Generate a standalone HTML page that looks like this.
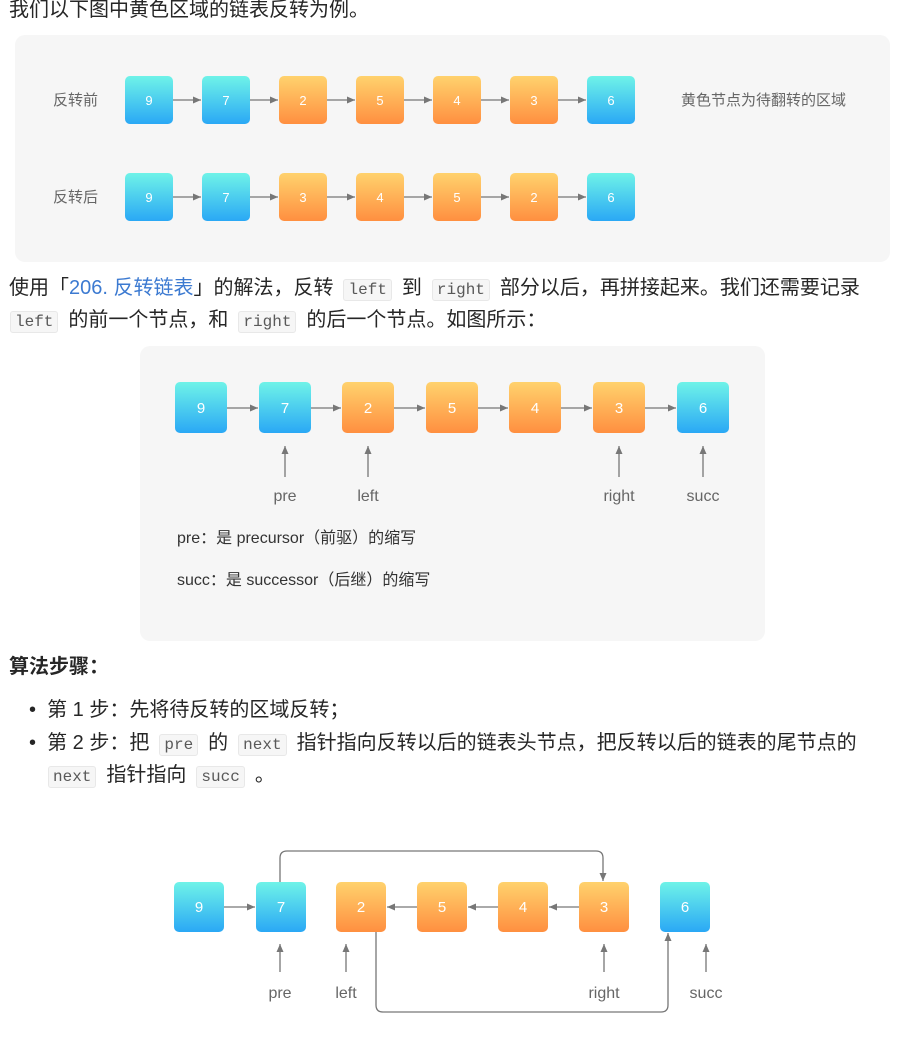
<!DOCTYPE html>
<html><head><meta charset="utf-8">
<style>
body{margin:0;width:898px;height:1042px;background:#fff;font-family:"Liberation Sans","Noto Sans CJK SC",sans-serif;color:#262626;font-size:20px;position:relative;overflow:hidden}
.t{position:absolute;white-space:nowrap;line-height:26px}
code{font-family:"Liberation Mono","DejaVu Sans Mono",monospace;font-size:16px;color:#595959;background:#f6f6f6;border:1px solid #e8e8e8;border-radius:3px;padding:1px 4px;margin:0 10px}
a{color:#3c7ad1;text-decoration:none}
svg{position:absolute;left:0;top:0}
svg text{font-family:"Liberation Sans","Noto Sans CJK SC",sans-serif}
</style></head><body>
<svg width="898" height="1042">
<defs>
<linearGradient id="b" x1="0" y1="0" x2="0" y2="1"><stop offset="0" stop-color="#6ff3e8"/><stop offset="1" stop-color="#2aa8f5"/></linearGradient>
<linearGradient id="o" x1="0" y1="0" x2="0" y2="1"><stop offset="0" stop-color="#ffd26d"/><stop offset="1" stop-color="#ff8f40"/></linearGradient>
<marker id="ar" markerUnits="userSpaceOnUse" markerWidth="9" markerHeight="8" refX="8" refY="4" orient="auto"><path d="M0,0.5 L8,4 L0,7.5 z" fill="#777"/></marker>
</defs>
<rect x="15" y="35" width="875" height="227" rx="10" fill="#f6f6f6"/>
<rect x="140" y="346" width="625" height="295" rx="10" fill="#f6f6f6"/>
<g font-size="15" fill="#666">
<text x="53" y="105">反转前</text><text x="53" y="202">反转后</text>
<text x="681" y="105">黄色节点为待翻转的区域</text>
</g>
<g stroke="#777" stroke-width="1.3" marker-end="url(#ar)">
<line x1="173" y1="100" x2="201" y2="100"/><line x1="250" y1="100" x2="278" y2="100"/><line x1="327" y1="100" x2="355" y2="100"/><line x1="404" y1="100" x2="432" y2="100"/><line x1="481" y1="100" x2="509" y2="100"/><line x1="558" y1="100" x2="586" y2="100"/>
<line x1="173" y1="197" x2="201" y2="197"/><line x1="250" y1="197" x2="278" y2="197"/><line x1="327" y1="197" x2="355" y2="197"/><line x1="404" y1="197" x2="432" y2="197"/><line x1="481" y1="197" x2="509" y2="197"/><line x1="558" y1="197" x2="586" y2="197"/>
<line x1="227" y1="408" x2="258" y2="408"/><line x1="311" y1="408" x2="341" y2="408"/><line x1="394" y1="408" x2="425" y2="408"/><line x1="478" y1="408" x2="508" y2="408"/><line x1="561" y1="408" x2="592" y2="408"/><line x1="645" y1="408" x2="676" y2="408"/>
<line x1="285" y1="477" x2="285" y2="446"/><line x1="368" y1="477" x2="368" y2="446"/><line x1="619" y1="477" x2="619" y2="446"/><line x1="703" y1="477" x2="703" y2="446"/>
<line x1="224" y1="907" x2="255" y2="907"/>
<line x1="579" y1="907" x2="549" y2="907"/><line x1="498" y1="907" x2="468" y2="907"/><line x1="417" y1="907" x2="387" y2="907"/>
<line x1="280" y1="972" x2="280" y2="944"/><line x1="346" y1="972" x2="346" y2="944"/><line x1="604" y1="972" x2="604" y2="944"/><line x1="706" y1="972" x2="706" y2="944"/>
<path d="M280,882 V858 Q280,851 287,851 H596 Q603,851 603,858 V881" fill="none"/>
<path d="M376,932 V1005 Q376,1012 383,1012 H661 Q668,1012 668,1005 V933" fill="none"/>
</g>
<g font-size="13" fill="#fff" text-anchor="middle">
<rect x="125" y="76" width="48" height="48" rx="5" fill="url(#b)"/><text x="149" y="105">9</text>
<rect x="202" y="76" width="48" height="48" rx="5" fill="url(#b)"/><text x="226" y="105">7</text>
<rect x="279" y="76" width="48" height="48" rx="5" fill="url(#o)"/><text x="303" y="105">2</text>
<rect x="356" y="76" width="48" height="48" rx="5" fill="url(#o)"/><text x="380" y="105">5</text>
<rect x="433" y="76" width="48" height="48" rx="5" fill="url(#o)"/><text x="457" y="105">4</text>
<rect x="510" y="76" width="48" height="48" rx="5" fill="url(#o)"/><text x="534" y="105">3</text>
<rect x="587" y="76" width="48" height="48" rx="5" fill="url(#b)"/><text x="611" y="105">6</text>
<rect x="125" y="173" width="48" height="48" rx="5" fill="url(#b)"/><text x="149" y="202">9</text>
<rect x="202" y="173" width="48" height="48" rx="5" fill="url(#b)"/><text x="226" y="202">7</text>
<rect x="279" y="173" width="48" height="48" rx="5" fill="url(#o)"/><text x="303" y="202">3</text>
<rect x="356" y="173" width="48" height="48" rx="5" fill="url(#o)"/><text x="380" y="202">4</text>
<rect x="433" y="173" width="48" height="48" rx="5" fill="url(#o)"/><text x="457" y="202">5</text>
<rect x="510" y="173" width="48" height="48" rx="5" fill="url(#o)"/><text x="534" y="202">2</text>
<rect x="587" y="173" width="48" height="48" rx="5" fill="url(#b)"/><text x="611" y="202">6</text>
</g>
<g font-size="15" fill="#fff" text-anchor="middle">
<rect x="175" y="382" width="52" height="51" rx="5" fill="url(#b)"/><text x="201" y="413">9</text>
<rect x="259" y="382" width="52" height="51" rx="5" fill="url(#b)"/><text x="285" y="413">7</text>
<rect x="342" y="382" width="52" height="51" rx="5" fill="url(#o)"/><text x="368" y="413">2</text>
<rect x="426" y="382" width="52" height="51" rx="5" fill="url(#o)"/><text x="452" y="413">5</text>
<rect x="509" y="382" width="52" height="51" rx="5" fill="url(#o)"/><text x="535" y="413">4</text>
<rect x="593" y="382" width="52" height="51" rx="5" fill="url(#o)"/><text x="619" y="413">3</text>
<rect x="677" y="382" width="52" height="51" rx="5" fill="url(#b)"/><text x="703" y="413">6</text>
<rect x="174" y="882" width="50" height="50" rx="5" fill="url(#b)"/><text x="199" y="912">9</text>
<rect x="256" y="882" width="50" height="50" rx="5" fill="url(#b)"/><text x="281" y="912">7</text>
<rect x="336" y="882" width="50" height="50" rx="5" fill="url(#o)"/><text x="361" y="912">2</text>
<rect x="417" y="882" width="50" height="50" rx="5" fill="url(#o)"/><text x="442" y="912">5</text>
<rect x="498" y="882" width="50" height="50" rx="5" fill="url(#o)"/><text x="523" y="912">4</text>
<rect x="579" y="882" width="50" height="50" rx="5" fill="url(#o)"/><text x="604" y="912">3</text>
<rect x="660" y="882" width="50" height="50" rx="5" fill="url(#b)"/><text x="685" y="912">6</text>
</g>
<g font-size="16" fill="#666" text-anchor="middle">
<text x="285" y="501">pre</text><text x="368" y="501">left</text><text x="619" y="501">right</text><text x="703" y="501">succ</text>
<text x="280" y="998">pre</text><text x="346" y="998">left</text><text x="604" y="998">right</text><text x="706" y="998">succ</text>
</g>
<g font-size="16" fill="#333">
<text x="177" y="543">pre：是 precursor（前驱）的缩写</text>
<text x="177" y="585">succ：是 successor（后继）的缩写</text>
</g>
</svg>
<div class="t" style="left:9px;top:-3px">我们以下图中黄色区域的链表反转为例。</div>
<div class="t" style="left:9px;top:275px">使用「<a>206. 反转链表</a>」的解法，反转<code>left</code>到<code>right</code>部分以后，再拼接起来。我们还需要记录</div>
<div class="t" style="left:0px;top:307px"><code>left</code>的前一个节点，和<code>right</code>的后一个节点。如图所示：</div>
<div class="t" style="left:9px;top:654px;font-weight:bold">算法步骤：</div>
<div class="t" style="left:29px;top:697px">•&nbsp;&nbsp;第 1 步：先将待反转的区域反转；</div>
<div class="t" style="left:29px;top:730px">•&nbsp;&nbsp;第 2 步：把<code>pre</code>的<code>next</code>指针指向反转以后的链表头节点，把反转以后的链表的尾节点的</div>
<div class="t" style="left:38px;top:762px"><code>next</code>指针指向<code>succ</code>。</div>
</body></html>
